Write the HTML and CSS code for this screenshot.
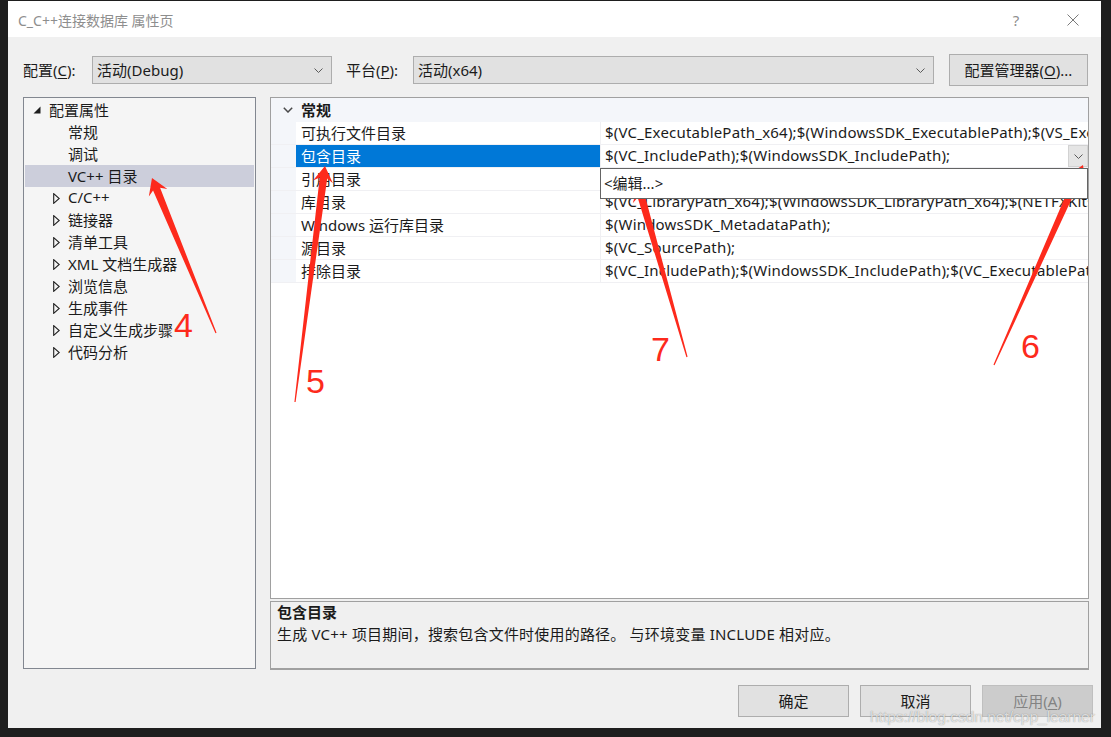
FILE: index.html
```html
<!DOCTYPE html>
<html lang="zh-CN">
<head>
<meta charset="utf-8">
<title>C_C++连接数据库 属性页</title>
<link rel="stylesheet" href="styles.css">
</head>
<body>
<div class="window">
  <div class="titlebar">
    <span class="title">C_C++连接数据库 属性页</span>
    <span class="tb-help">?</span>
    <span class="tb-close"><svg width="12" height="12" viewBox="0 0 12 12"><path d="M0.5 0.5 L11.5 11.5 M11.5 0.5 L0.5 11.5" stroke="#7a7a7a" stroke-width="1" fill="none"/></svg></span>
  </div>
  <div class="client">
    <div class="configrow">
      <span class="lbl lbl-config">配置(<u>C</u>):</span>
      <div class="combo combo-config"><span class="combo-text">活动(Debug)</span><svg class="chev" width="9" height="5" viewBox="0 0 9 5"><polyline points="0.5,0.5 4.5,4.5 8.5,0.5" fill="none" stroke="#5a5a5a" stroke-width="1"/></svg></div>
      <span class="lbl lbl-platform">平台(<u>P</u>):</span>
      <div class="combo combo-platform"><span class="combo-text">活动(x64)</span><svg class="chev" width="9" height="5" viewBox="0 0 9 5"><polyline points="0.5,0.5 4.5,4.5 8.5,0.5" fill="none" stroke="#5a5a5a" stroke-width="1"/></svg></div>
      <button class="btn btn-manager">配置管理器(<u>O</u>)...</button>
    </div>

    <div class="main">
      <div class="tree">
        <div class="node l0"><span class="exp"><svg width="8" height="8" viewBox="0 0 8 8"><polygon points="7.5,0.5 7.5,7.5 0.5,7.5" fill="#1e1e1e"/></svg></span><span>配置属性</span></div>
        <div class="node leaf">常规</div>
        <div class="node leaf">调试</div>
        <div class="node leaf selected">VC++ 目录</div>
        <div class="node l1"><span class="exp"><svg width="7" height="11" viewBox="0 0 7 11"><polygon points="0.7,0.7 6.2,5.5 0.7,10.3" fill="none" stroke="#1e1e1e" stroke-width="1.1"/></svg></span><span>C/C++</span></div>
        <div class="node l1"><span class="exp"><svg width="7" height="11" viewBox="0 0 7 11"><polygon points="0.7,0.7 6.2,5.5 0.7,10.3" fill="none" stroke="#1e1e1e" stroke-width="1.1"/></svg></span><span>链接器</span></div>
        <div class="node l1"><span class="exp"><svg width="7" height="11" viewBox="0 0 7 11"><polygon points="0.7,0.7 6.2,5.5 0.7,10.3" fill="none" stroke="#1e1e1e" stroke-width="1.1"/></svg></span><span>清单工具</span></div>
        <div class="node l1"><span class="exp"><svg width="7" height="11" viewBox="0 0 7 11"><polygon points="0.7,0.7 6.2,5.5 0.7,10.3" fill="none" stroke="#1e1e1e" stroke-width="1.1"/></svg></span><span>XML 文档生成器</span></div>
        <div class="node l1"><span class="exp"><svg width="7" height="11" viewBox="0 0 7 11"><polygon points="0.7,0.7 6.2,5.5 0.7,10.3" fill="none" stroke="#1e1e1e" stroke-width="1.1"/></svg></span><span>浏览信息</span></div>
        <div class="node l1"><span class="exp"><svg width="7" height="11" viewBox="0 0 7 11"><polygon points="0.7,0.7 6.2,5.5 0.7,10.3" fill="none" stroke="#1e1e1e" stroke-width="1.1"/></svg></span><span>生成事件</span></div>
        <div class="node l1"><span class="exp"><svg width="7" height="11" viewBox="0 0 7 11"><polygon points="0.7,0.7 6.2,5.5 0.7,10.3" fill="none" stroke="#1e1e1e" stroke-width="1.1"/></svg></span><span>自定义生成步骤</span></div>
        <div class="node l1"><span class="exp"><svg width="7" height="11" viewBox="0 0 7 11"><polygon points="0.7,0.7 6.2,5.5 0.7,10.3" fill="none" stroke="#1e1e1e" stroke-width="1.1"/></svg></span><span>代码分析</span></div>
      </div>

      <div class="rightcol">
        <div class="grid">
          <div class="cat">
            <span class="cat-toggle"><svg width="10" height="6" viewBox="0 0 10 6"><polyline points="0.8,0.8 5,5 9.2,0.8" fill="none" stroke="#4a4a4a" stroke-width="1.5"/></svg></span>
            <span class="cat-name">常规</span>
          </div>
          <div class="prow"><div class="gut"></div><div class="pname">可执行文件目录</div><div class="pval"><span class="pval-text">$(VC_ExecutablePath_x64);$(WindowsSDK_ExecutablePath);$(VS_ExecutablePath);$(MSBuild_ExecutablePath);$(FxCopDir);$(PATH);</span></div></div>
          <div class="prow"><div class="gut"></div><div class="pname sel">包含目录</div><div class="pval"><span class="pval-text">$(VC_IncludePath);$(WindowsSDK_IncludePath);</span><span class="dd-btn"><svg width="9" height="5" viewBox="0 0 9 5"><polyline points="0.5,0.5 4.5,4.5 8.5,0.5" fill="none" stroke="#5a5a5a" stroke-width="1"/></svg></span><div class="dd-popup">&lt;编辑...&gt;</div></div></div>
          <div class="prow"><div class="gut"></div><div class="pname">引用目录</div><div class="pval"><span class="pval-text">$(VC_ReferencesPath_x64);</span></div></div>
          <div class="prow"><div class="gut"></div><div class="pname">库目录</div><div class="pval"><span class="pval-text">$(VC_LibraryPath_x64);$(WindowsSDK_LibraryPath_x64);$(NETFXKitsDir)Lib\um\x64</span></div></div>
          <div class="prow"><div class="gut"></div><div class="pname">Windows 运行库目录</div><div class="pval"><span class="pval-text">$(WindowsSDK_MetadataPath);</span></div></div>
          <div class="prow"><div class="gut"></div><div class="pname">源目录</div><div class="pval"><span class="pval-text">$(VC_SourcePath);</span></div></div>
          <div class="prow"><div class="gut"></div><div class="pname">排除目录</div><div class="pval"><span class="pval-text">$(VC_IncludePath);$(WindowsSDK_IncludePath);$(VC_ExecutablePath_x64);$(VC_LibraryPath_x64);</span></div></div>
        </div>
        <div class="desc">
          <div class="desc-title">包含目录</div>
          <div class="desc-text">生成 VC++ 项目期间，搜索包含文件时使用的路径。 与环境变量 INCLUDE 相对应。</div>
        </div>
      </div>
    </div>

    <div class="buttons">
      <button class="btn btn-dlg">确定</button>
      <button class="btn btn-dlg">取消</button>
      <button class="btn btn-dlg disabled">应用(<u>A</u>)</button>
    </div>
  </div>
</div>

<svg class="annot" width="1111" height="737" viewBox="0 0 1111 737">
  <g fill="#fd2a1c">
    <polygon transform="translate(216 333) rotate(-112.44)" points="0,-0.6 155.7,-3.8 151.7,-10 167.7,0 151.7,10 155.7,3.8 0,0.6"/>
    <polygon transform="translate(295 402) rotate(-82.76)" points="0,-0.6 225.9,-3.8 221.9,-10 237.9,0 221.9,10 225.9,3.8 0,0.6"/>
    <polygon transform="translate(687 357) rotate(-105.90)" points="0,-0.6 166.8,-3.8 162.8,-10 178.8,0 162.8,10 166.8,3.8 0,0.6"/>
    <polygon transform="translate(994 365) rotate(-66.01)" points="0,-0.6 206.9,-3.8 202.9,-10 218.9,0 202.9,10 206.9,3.8 0,0.6"/>
    <text class="anum" x="174" y="337">4</text>
    <text class="anum" x="306" y="393">5</text>
    <text class="anum" x="651" y="361">7</text>
    <text class="anum" x="1021" y="358">6</text>
  </g>
</svg>
<div class="watermark">https://blog.csdn.net/cpp_learner</div>
</body>
</html>
```

FILE: styles.css
```css
* { box-sizing: border-box; }

body {
  margin: 0;
  width: 1111px;
  height: 737px;
  padding: 1px 0 0 8px;
  background: #1e1e1e;
  position: relative;
  overflow: hidden;
  font-family: "Noto Sans", "Noto Sans CJK SC", sans-serif;
  font-size: 15px;
  color: #1b1b1b;
}

.window {
  width: 1093px;
  height: 727px;
  display: flex;
  flex-direction: column;
  background: #f0f0f0;
}

/* title bar */
.titlebar {
  height: 36px;
  background: #ffffff;
  display: flex;
  align-items: center;
  padding: 2px 0 0 10px;
  color: #8e8e8e;
  font-size: 14px;
}
.title { flex: 1; }
.tb-help {
  width: 30px;
  text-align: center;
  margin-right: 19px;
  font-size: 15px;
  color: #8e8e8e;
}
.tb-close {
  width: 46px;
  margin-right: 5px;
  display: flex;
  justify-content: center;
}

/* client */
.client {
  flex: 1;
  display: flex;
  flex-direction: column;
  padding: 17px 12px 0 15px;
}

.configrow {
  height: 32px;
  display: flex;
  align-items: center;
}
.lbl { white-space: nowrap; padding-bottom: 2px; }
.lbl-config { width: 69px; }
.lbl-platform { width: 67px; margin-left: 14px; }
.lbl u, .btn u { text-decoration: underline; text-underline-offset: 2px; }

.combo {
  height: 28px;
  background: #e1e1e1;
  border: 1px solid #adadad;
  display: flex;
  align-items: center;
  padding: 0 8px 0 4px;
}
.combo-text { flex: 1; padding-bottom: 2px; }
.combo-config { width: 240px; }
.combo-platform { width: 521px; }
.chev { flex: none; }

.btn {
  font-family: "Noto Sans", "Noto Sans CJK SC", sans-serif;
  font-size: 15px;
  color: #1b1b1b;
  background: #e1e1e1;
  border: 1px solid #adadad;
  padding: 0 0 2px 0;
}
.btn-manager {
  width: 139px;
  height: 32px;
  margin-left: 15px;
}

/* main area */
.main {
  margin-top: 11px;
  height: 573px;
  display: flex;
  gap: 14px;
}

.tree {
  width: 233px;
  height: 572px;
  background: #f5f5f5;
  border: 1px solid #828790;
  padding-top: 1px;
}
.node {
  height: 22px;
  display: flex;
  align-items: center;
  white-space: nowrap;
  padding-bottom: 2px;
}
.node.l0 { padding-left: 9px; }
.node.l0 .exp { width: 16px; padding-top: 2px; }
.node.l1 { padding-left: 29px; }
.node.l1 .exp { width: 15px; padding-top: 2px; }
.node.leaf { padding-left: 44px; }
.node.selected {
  background: #cccedb;
  margin: 0 1px;
  padding-left: 43px;
}
.exp { display: flex; align-items: center; }

.rightcol {
  width: 819px;
  display: flex;
  flex-direction: column;
  gap: 2px;
}

.grid {
  height: 502px;
  background: #ffffff;
  border: 1px solid #a0a0a0;
}
.cat {
  height: 24px;
  background: #f4f6fa;
  display: flex;
  align-items: center;
}
.cat-toggle {
  width: 30px;
  display: flex;
  justify-content: center;
  padding-left: 3px;
}
.cat-name { font-weight: bold; padding-bottom: 2px; }

.prow {
  height: 23px;
  display: flex;
  border-bottom: 1px solid #f0f0f3;
}
.gut {
  width: 25px;
  background: #f4f6fa;
}
.pname {
  width: 304px;
  padding: 0 0 2px 5px;
  display: flex;
  align-items: center;
  white-space: nowrap;
}
.pname.sel {
  background: #0078d7;
  color: #ffffff;
}
.pval {
  flex: 1;
  min-width: 0;
  position: relative;
  display: flex;
  align-items: center;
  border-left: 1px solid #f0f0f3;
  padding-left: 4px;
}
.pval-text {
  flex: 1;
  min-width: 0;
  overflow: hidden;
  white-space: nowrap;
  letter-spacing: 0.2px;
  padding-bottom: 2px;
}
.dd-btn {
  width: 20px;
  height: 22px;
  flex: none;
  background: #e5e5e5;
  border: 1px solid #d2d2d2;
  display: flex;
  align-items: center;
  justify-content: center;
}
.dd-popup {
  position: absolute;
  top: 23px;
  left: -1px;
  right: 0;
  height: 31px;
  background: #ffffff;
  border: 1px solid #646464;
  padding: 0 0 2px 3px;
  display: flex;
  align-items: center;
  z-index: 2;
}

.desc {
  height: 69px;
  background: #f0f0f0;
  border: 1px solid #a0a0a0;
  border-bottom: 2px solid #a0a0a0;
  padding: 0 6px 0 6px;
  font-size: 15px;
}
.desc-title {
  font-weight: bold;
  line-height: 20px;
}
.desc-text {
  margin-top: 2px;
  line-height: 20px;
  white-space: nowrap;
  letter-spacing: 0.2px;
}

.buttons {
  margin-top: 15px;
  margin-right: -4px;
  display: flex;
  justify-content: flex-end;
  gap: 11px;
}
.btn-dlg {
  width: 111px;
  height: 32px;
}
.btn-dlg.disabled {
  background: #cccccc;
  border-color: #bfbfbf;
  color: #838383;
}

/* annotations */
.annot {
  position: absolute;
  left: 0;
  top: 0;
  pointer-events: none;
}
.anum {
  font-family: "Liberation Sans", sans-serif;
  font-size: 34px;
}

.watermark {
  position: absolute;
  left: 870px;
  top: 708px;
  font-family: "Liberation Sans", sans-serif;
  font-size: 15.5px;
  color: rgba(255, 255, 255, 0.72);
  text-shadow: 0 0 1px rgba(60, 60, 60, 0.6);
  white-space: nowrap;
}
```
